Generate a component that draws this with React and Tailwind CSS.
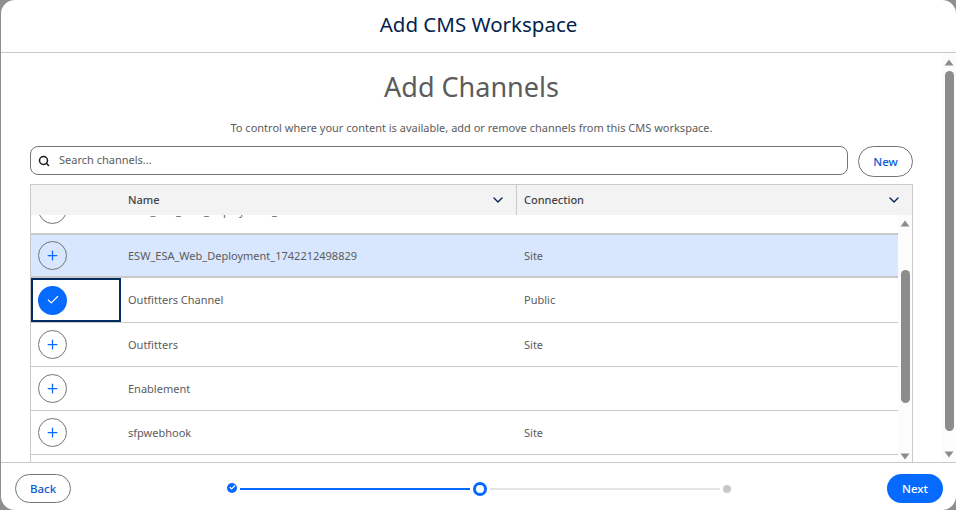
import React from "react";
import { Search, ChevronDown, Plus, Check } from "lucide-react";

const rows = [
  { name: "ESW_Test_Web_Deployment_1741480008800", connection: "Site", heavy: true, partial: true },
  { name: "ESW_ESA_Web_Deployment_1742212498829", connection: "Site", highlighted: true, heavy: true },
  { name: "Outfitters Channel", connection: "Public", added: true },
  { name: "Outfitters", connection: "Site" },
  { name: "Enablement", connection: "" },
  { name: "sfpwebhook", connection: "Site" },
];

function Arrow({ up }) {
  return (
    <svg width="10" height="7" viewBox="0 0 10 7" className="shrink-0">
      <path d={up ? "M5 0.5 L9.5 6.5 L0.5 6.5 Z" : "M0.5 0.5 L9.5 0.5 L5 6.5 Z"} fill="#8c8c8c" />
    </svg>
  );
}

function RowButton({ added }) {
  if (added) {
    return (
      <span className="flex h-[29px] w-[29px] items-center justify-center rounded-full bg-[#066afe]">
        <Check size={14} color="#ffffff" strokeWidth={2} />
      </span>
    );
  }
  return (
    <span className="flex h-[29px] w-[29px] items-center justify-center rounded-full border border-[#747474]">
      <Plus size={15} color="#066afe" strokeWidth={2} />
    </span>
  );
}

function Row({ row }) {
  let rowClass = "h-[44px] border-b";
  if (row.partial) rowClass = "h-[46px] border-b-2 pb-[4px]";
  if (row.highlighted) rowClass = "h-[43px] border-b-2 bg-[#d8e6fe]";
  if (row.added) rowClass = "h-[45px] border-b";

  // the row cut off by the header sits a little lower than its button
  const textOffset = row.partial ? "pt-[5px]" : "pt-px";

  return (
    <div className={`flex shrink-0 items-center border-[#c9c9c9] ${rowClass}`}>
      <div
        className={`flex h-full w-[90px] shrink-0 items-center ${
          row.added ? "border-2 border-[#032d60] pl-[5px]" : "pl-[7px]"
        }`}
      >
        <RowButton added={row.added} />
      </div>
      <div className={`w-[395px] shrink-0 truncate pl-[7px] text-[11px] text-[#5c5c5c] ${textOffset}`}>{row.name}</div>
      <div className={`flex-1 pl-[8px] text-[11px] text-[#5c5c5c] ${textOffset}`}>{row.connection}</div>
    </div>
  );
}

export default function App() {
  return (
    <div className="h-[510px] w-[956px] overflow-hidden bg-[#8f8f8f] pl-px font-['Noto_Sans','Open_Sans',sans-serif]">
      <div className="flex h-full flex-col overflow-hidden rounded-[14px] bg-white">
        {/* header */}
        <div className="flex h-[53px] shrink-0 items-center justify-center border-b border-[#c9c9c9] pb-[3px]">
          <h1 className="text-[20.5px] text-[#03234d]">Add CMS Workspace</h1>
        </div>

        {/* body */}
        <div className="flex min-h-0 flex-1">
          <div className="flex min-w-0 flex-1 flex-col pl-[29px] pr-[29px]">
            <h2 className="mt-[12px] h-[43px] text-center text-[27px] leading-[43px] text-[#5c5c5c]">Add Channels</h2>
            <p className="mt-[11px] h-[18px] text-center text-[11px] leading-[18px] text-[#5c5c5c]">
              To control where your content is available, add or remove channels from this CMS workspace.
            </p>
            <div className="mt-[9px] flex h-[31px] shrink-0 items-start gap-[10px]">
              <div className="flex h-[29px] flex-1 items-center gap-[9px] rounded-[8px] border border-[#747474] pl-[7px]">
                <Search size={12} color="#181818" strokeWidth={3} />
                <span className="text-[11px] text-[#5c5c5c]">Search channels...</span>
              </div>
              <button className="h-[31px] w-[55px] rounded-full border border-[#747474] text-[11.5px] font-medium text-[#0b5cd5]">
                New
              </button>
            </div>

            {/* table */}
            <div className="mt-[7px] flex min-h-0 flex-1 flex-col overflow-hidden border-x border-t border-[#c9c9c9]">
              <div className="flex h-[30px] shrink-0 items-center bg-[#f3f3f3] text-[11px] font-medium text-[#444444]">
                <div className="w-[90px]" />
                <div className="flex w-[395px] items-center justify-between pl-[7px] pr-[10px]">
                  <span>Name</span>
                  <ChevronDown size={16} color="#03234d" strokeWidth={2} />
                </div>
                <div className="flex h-full flex-1 items-center justify-between border-l border-[#c9c9c9] pl-[7px] pr-[10px]">
                  <span>Connection</span>
                  <ChevronDown size={16} color="#03234d" strokeWidth={2} />
                </div>
              </div>
              <div className="flex min-h-0 flex-1">
                <div className="min-w-0 flex-1 overflow-hidden">
                  <div className="-mt-[26px] flex flex-col">
                    {rows.map((row) => (
                      <Row key={row.name} row={row} />
                    ))}
                  </div>
                </div>
                <div className="flex w-[14px] shrink-0 flex-col items-center bg-[#fcfcfc] pt-[5px]">
                  <Arrow up />
                  <div className="mt-[43px] h-[133px] w-[9px] rounded-full bg-[#8c8c8c]" />
                  <div className="flex-1" />
                  <div className="pb-[2px]">
                    <Arrow />
                  </div>
                </div>
              </div>
            </div>
          </div>

          {/* page scrollbar */}
          <div className="flex w-[14px] shrink-0 flex-col items-center bg-[#fcfcfc] pt-[6px]">
            <Arrow up />
            <div className="mt-[5px] h-[360px] w-[9px] rounded-full bg-[#8c8c8c]" />
            <div className="flex-1" />
            <div className="pb-[4px]">
              <Arrow />
            </div>
          </div>
        </div>

        {/* footer */}
        <div className="flex h-[48px] shrink-0 items-start justify-between border-t border-[#c9c9c9] pl-[14px] pr-[13px] pt-[11px]">
          <button className="h-[29px] w-[56px] rounded-full border border-[#747474] text-[11.5px] font-medium text-[#0b5cd5]">
            Back
          </button>
          <div className="flex h-[29px] items-center">
            <span className="-mt-[2px] flex h-[10px] w-[10px] items-center justify-center rounded-full bg-[#066afe]">
              <Check size={7} color="#ffffff" strokeWidth={4} />
            </span>
            <div className="ml-[3px] h-[2px] w-[230px] bg-[#066afe]" />
            <span className="ml-[3px] h-[14px] w-[14px] rounded-full border-[3px] border-[#066afe] bg-white" />
            <div className="ml-[3px] h-[2px] w-[230px] bg-[#e5e5e5]" />
            <span className="ml-[3px] h-[8px] w-[8px] rounded-full bg-[#c9c9c9]" />
          </div>
          <button className="h-[29px] w-[56px] rounded-full bg-[#066afe] text-[11.5px] font-medium text-white">
            Next
          </button>
        </div>
      </div>
    </div>
  );
}
